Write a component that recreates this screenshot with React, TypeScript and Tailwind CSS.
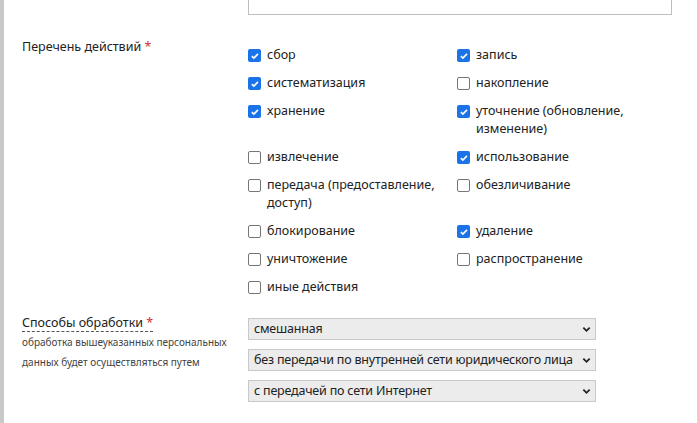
const actions: [string, boolean][] = [
  ["сбор", true],
  ["запись", true],
  ["систематизация", true],
  ["накопление", false],
  ["хранение", true],
  ["уточнение (обновление, изменение)", true],
  ["извлечение", false],
  ["использование", true],
  ["передача (предоставление, доступ)", false],
  ["обезличивание", false],
  ["блокирование", false],
  ["удаление", true],
  ["уничтожение", false],
  ["распространение", false],
  ["иные действия", false],
];

const selects = [
  "смешанная",
  "без передачи по внутренней сети юридического лица",
  "с передачей по сети Интернет",
];

function Box({ checked }: { checked: boolean }) {
  return checked ? (
    <span className="mt-[3px] flex h-[13px] w-[13px] shrink-0 items-center justify-center rounded-[2px] bg-[#1a73e8]">
      <svg viewBox="0 0 12 12" className="h-[10px] w-[10px]">
        <path d="M2.2 6.2l2.4 2.4 5-5.2" fill="none" stroke="white" strokeWidth="1.9" />
      </svg>
    </span>
  ) : (
    <span className="mt-[3px] h-[13px] w-[13px] shrink-0 rounded-[2px] border border-[#767676] bg-white" />
  );
}

export default function App() {
  return (
    <div className="h-[423px] w-[697px] overflow-hidden border-l-[4px] border-[#c8c8c8] bg-white font-['Open_Sans',sans-serif] text-[12.5px] leading-[18px] text-[#222]">
      <div className="ml-[244px] h-[15px] w-[424px] border border-t-0 border-[#bdbdbd]" />
      <div className="mt-[31px] flex">
        <div className="-mt-[8px] w-[244px] pl-[18px]">
          Перечень действий <span className="text-[#d32f2f]">*</span>
        </div>
        <div className="grid grid-cols-[209px_209px] gap-y-[10px]">
          {actions.map(([t, c]) => (
            <label key={t} className="flex gap-[6px]">
              <Box checked={c} />
              <span className="w-[172px]">{t}</span>
            </label>
          ))}
        </div>
      </div>
      <div className="mt-[18px] flex">
        <div className="w-[244px] pl-[18px]">
          <div className="inline-block border-b border-dashed border-[#555] leading-[17px]">
            Способы обработки <span className="text-[#d32f2f]">*</span>
          </div>
          <div className="text-[10px] leading-[20px] text-[#444]">
            обработка вышеуказанных персональных данных будет осуществляться путем
          </div>
        </div>
        <div className="mt-[4px] flex flex-col gap-[9px]">
          {selects.map((s) => (
            <div
              key={s}
              className="flex h-[22px] w-[348px] items-center justify-between whitespace-nowrap border border-[#c9c9c9] bg-[#ececec] pl-[5px] pr-[4px] tracking-[-0.2px]"
            >
              <span>{s}</span>
              <svg viewBox="0 0 10 10" className="h-[9px] w-[9px] shrink-0">
                <path d="M1.5 3l3.5 3.5L8.5 3" fill="none" stroke="#222" strokeWidth="2" />
              </svg>
            </div>
          ))}
        </div>
      </div>
    </div>
  );
}
